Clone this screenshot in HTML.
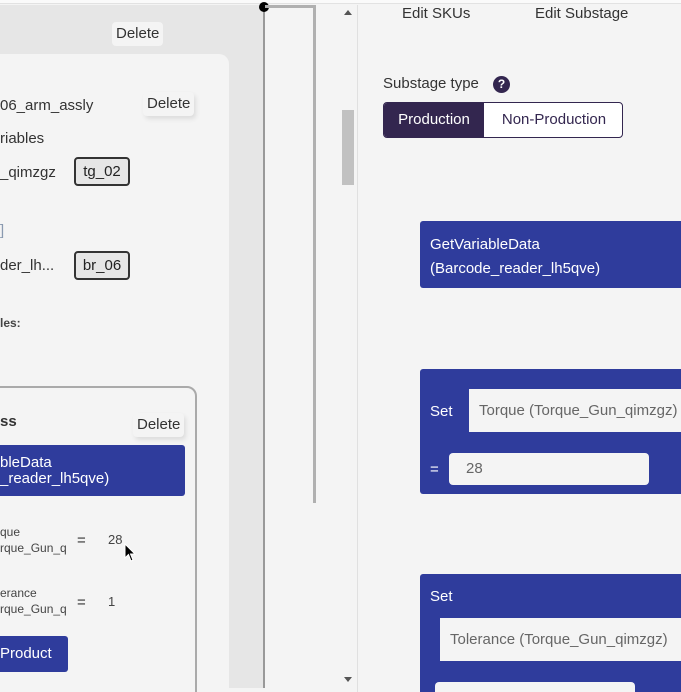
<!DOCTYPE html>
<html style="width:681px;height:692px;overflow:hidden"><head><style>
*{margin:0;padding:0;box-sizing:border-box}
body{width:681px;height:692px;overflow:hidden;background:#f4f4f4;font-family:"Liberation Sans",sans-serif;position:relative;color:#333}
.a{position:absolute;white-space:nowrap}
.t{font-size:15px;color:#333}
.s{font-size:12px;color:#444}
.blue{background:#2f3c9c;color:#fff;border-radius:3px}
.btn{background:#f4f4f4;font-size:15px;color:#333;border-radius:4px;padding:0 4px;line-height:24px}
.tag{background:#e6e6e6;border:2px solid #333;border-radius:4px;font-size:15px;line-height:25px;text-align:center;color:#222}
.inp{background:#f4f4f4;color:#666;font-size:15px}
</style></head><body>
<div class="a" style="left:0;top:0;width:681px;height:4px;background:#fafafa;border-bottom:1px solid #e2e2e2"></div>
<div class="a" style="left:0;top:5px;width:263px;height:683px;background:#e6e6e6"></div>
<div class="a" style="left:0;top:54px;width:229px;height:638px;background:#f4f4f4;border-top-right-radius:10px"></div>
<div class="a" style="left:263px;top:6px;width:2px;height:682px;background:#999"></div>
<div class="a" style="left:259px;top:2px;width:10px;height:10px;border-radius:50%;background:#000"></div>
<div class="a" style="left:265px;top:5px;width:51px;height:3px;background:#b0b0b0"></div>
<div class="a" style="left:313px;top:5px;width:3px;height:498px;background:#b0b0b0"></div>
<div class="a" style="left:357px;top:5px;width:1px;height:687px;background:#e0e0e0"></div>
<div class="a" style="left:342px;top:110px;width:12px;height:75px;background:#c1c1c1"></div>
<div class="a" style="left:344px;top:10px;width:0;height:0;border-left:4px solid transparent;border-right:4px solid transparent;border-bottom:5px solid #555"></div>
<div class="a" style="left:344px;top:677px;width:0;height:0;border-left:4px solid transparent;border-right:4px solid transparent;border-top:5px solid #555"></div>

<div class="a btn" style="left:112px;top:22px">Delete</div>
<div class="a t" style="left:0;top:97px">06_arm_assly</div>
<div class="a btn" style="left:143px;top:92px;box-shadow:2px 3px 4px #ddd">Delete</div>
<div class="a t" style="left:0;top:130px">riables</div>
<div class="a t" style="left:0;top:164px">_qimzgz</div>
<div class="a tag" style="left:74px;top:157px;width:56px;height:29px">tg_02</div>
<div class="a t" style="left:0;top:222px;color:#8a9ab0">]</div>
<div class="a t" style="left:0;top:257px">der_lh...</div>
<div class="a tag" style="left:74px;top:251px;width:56px;height:29px">br_06</div>
<div class="a s" style="left:0;top:316px;font-weight:bold">les:</div>

<div class="a" style="left:-10px;top:386px;width:207px;height:330px;border:2px solid #aaa;border-radius:10px"></div>
<div class="a t" style="left:0;top:413px;font-weight:bold">ss</div>
<div class="a btn" style="left:133px;top:413px;box-shadow:2px 3px 4px #ddd">Delete</div>
<div class="a blue t" style="left:-5px;top:445px;width:190px;height:51px;color:#fff;padding:10px 0 0 5px;line-height:16px">bleData<br>_reader_lh5qve)</div>
<div class="a s" style="left:0;top:524px;line-height:16px">que<br>rque_Gun_q</div>
<div class="a t" style="left:77px;top:532px">=</div>
<div class="a s" style="left:108px;top:532px;font-size:13px">28</div>
<div class="a s" style="left:0;top:585px;line-height:16px">erance<br>rque_Gun_q</div>
<div class="a t" style="left:77px;top:594px">=</div>
<div class="a s" style="left:108px;top:594px;font-size:13px">1</div>
<div class="a blue t" style="left:-5px;top:636px;width:73px;height:36px;color:#fff;line-height:36px;padding-left:5px">Product</div>
<svg class="a" style="left:124px;top:543px" width="14" height="20" viewBox="0 0 14 20"><path d="M1 1 L1 15 L4.5 11.5 L7 18 L9 17 L6.5 11 L11 11 Z" fill="#000" stroke="#fff" stroke-width="1"/></svg>

<div class="a t" style="left:402px;top:5px">Edit SKUs</div>
<div class="a t" style="left:535px;top:5px">Edit Substage</div>
<div class="a t" style="left:383px;top:75px">Substage type</div>
<div class="a" style="left:493px;top:76px;width:17px;height:17px;border-radius:50%;background:#33264f;color:#fff;font-size:12px;font-weight:bold;text-align:center;line-height:17px">?</div>
<div class="a" style="left:383px;top:102px;width:240px;height:36px;border:1px solid #33264f;border-radius:4px;overflow:hidden;background:#fff">
<div class="a" style="left:0;top:0;width:100px;height:36px;background:#33264f;color:#fff;font-size:15px;line-height:34px;text-align:center">Production</div>
<div class="a" style="left:100px;top:0;width:140px;height:36px;color:#33264f;font-size:15px;line-height:34px;text-align:center">Non-Production</div>
</div>
<div class="a blue" style="left:420px;top:221px;width:270px;height:67px;font-size:15px;padding:12px 0 0 10px;line-height:24px">GetVariableData<br>(Barcode_reader_lh5qve)</div>
<div class="a blue" style="left:420px;top:369px;width:270px;height:125px;font-size:15px">
<div class="a" style="left:10px;top:34px">Set</div>
<div class="a inp" style="left:49px;top:20px;width:230px;height:43px;line-height:43px;padding-left:10px">Torque (Torque_Gun_qimzgz)</div>
<div class="a" style="left:10px;top:92px">=</div>
<div class="a inp" style="left:29px;top:84px;width:200px;height:32px;line-height:32px;padding-left:17px;border-radius:4px">28</div>
</div>
<div class="a blue" style="left:420px;top:574px;width:270px;height:118px;font-size:15px;border-bottom-left-radius:0">
<div class="a" style="left:10px;top:14px">Set</div>
<div class="a inp" style="left:20px;top:44px;width:260px;height:43px;line-height:43px;padding-left:10px">Tolerance (Torque_Gun_qimzgz)</div>
<div class="a inp" style="left:15px;top:108px;width:200px;height:10px;border-radius:4px 4px 0 0"></div>
</div>
</body></html>
